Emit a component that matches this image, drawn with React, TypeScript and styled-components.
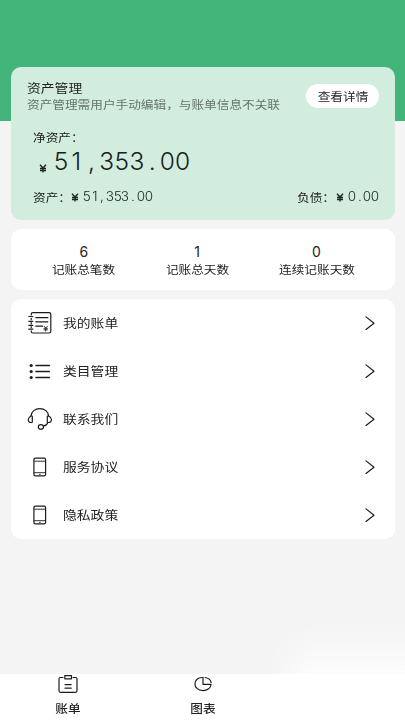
import React from "react";
import styled, { createGlobalStyle } from "styled-components";

const Global = createGlobalStyle`
  * { box-sizing: border-box; }
  body {
    margin: 0;
    background: #f4f4f4;
    font-family: Inter, "Noto Sans CJK SC", sans-serif;
    color: #222;
  }
`;

const Screen = styled.div`
  width: 405px;
  height: 720px;
  display: flex;
  flex-direction: column;
  overflow: hidden;
  background: linear-gradient(#43b57a 0 121px, #f4f4f4 121px);
`;

const Content = styled.main`
  flex: 1;
  display: flex;
  flex-direction: column;
  gap: 9px;
  padding: 67px 10px 0 11px;
`;

/* Wide lettering: glyphs are stretched sideways from the aligned edge. */
const Label = styled.span<{
  $size: number;
  $origin?: string;
  $color?: string;
  $weight?: number;
  $line?: number;
  $stretch?: number;
}>`
  display: block;
  flex-shrink: 0;
  width: max-content;
  white-space: nowrap;
  font-family: "Noto Sans CJK SC", sans-serif;
  font-size: ${(p) => p.$size}px;
  line-height: ${(p) => p.$line ?? 16}px;
  font-weight: ${(p) => p.$weight ?? 400};
  color: ${(p) => p.$color ?? "#222"};
  transform: scaleX(${(p) => p.$stretch ?? 1.15});
  transform-origin: ${(p) => p.$origin ?? "left"} center;
`;

const AssetCard = styled.section`
  height: 153px;
  border-radius: 10px;
  background: #d2ecde;
  padding: 13px 16px 0;
`;

const CardTop = styled.div`
  display: flex;
  justify-content: space-between;
  height: 49px;
`;

const DetailButton = styled.button`
  display: flex;
  align-items: center;
  justify-content: center;
  width: 73px;
  height: 24px;
  margin-top: 4px;
  padding: 0;
  border: 0;
  border-radius: 12px;
  background: #fff;
`;

const CardBody = styled.div`
  padding-left: 5.5px;
`;

const NetRow = styled.div`
  display: flex;
  align-items: flex-end;
  height: 33px;
  padding-left: 6px;
`;

const TotalsRow = styled.div`
  display: flex;
  justify-content: space-between;
  align-items: center;
  height: 16px;
  margin-top: 11px;
`;

const Total = styled.div`
  display: flex;
  align-items: center;
`;

const TotalLabel = styled.div<{ $w: number }>`
  width: ${(p) => p.$w}px;
`;

const Digits = styled.span<{ $size: number; $pitch: number; $line: number; $stretch: number }>`
  display: flex;
  font-family: Inter, sans-serif;
  font-size: ${(p) => p.$size}px;
  font-weight: 300;
  line-height: ${(p) => p.$line}px;
  color: #18201c;
  i {
    display: flex;
    justify-content: center;
    font-style: normal;
    width: ${(p) => p.$pitch}px;
    transform: scaleX(${(p) => p.$stretch});
  }
`;

const Yen = styled.svg<{ $gap: number; $drop?: number }>`
  width: 8px;
  height: 9px;
  margin-right: ${(p) => p.$gap}px;
  margin-bottom: ${(p) => p.$drop ?? 0}px;
  fill: none;
  stroke: #1c2420;
  stroke-width: 1.35;
`;

const StatsCard = styled.section`
  display: flex;
  height: 61px;
  padding: 14px 0 0 16px;
  border-radius: 10px;
  background: #fff;
`;

const Stat = styled.div<{ $w: number }>`
  flex: 0 0 ${(p) => p.$w}px;
  display: flex;
  flex-direction: column;
  align-items: center;
`;

const StatValue = styled.span`
  font-size: 14px;
  line-height: 18px;
`;

const Menu = styled.ul`
  margin: 0;
  padding: 0;
  list-style: none;
  height: 240px;
  border-radius: 10px;
  background: #fff;
`;

const MenuRow = styled.li`
  display: flex;
  align-items: center;
  height: 48px;
  padding: 0 20px 0 16px;
`;

const IconBox = styled.span`
  display: flex;
  width: 26px;
  height: 26px;
  margin-right: 10px;
`;

const Glyph = styled.svg<{ $w?: number; $h?: number }>`
  display: block;
  flex-shrink: 0;
  width: ${(p) => p.$w ?? 26}px;
  height: ${(p) => p.$h ?? 26}px;
  fill: none;
  stroke: #1c1c1c;
  stroke-width: 1.2;
  stroke-linecap: round;
  stroke-linejoin: round;
`;

const Chevron = styled(Glyph)`
  margin-left: auto;
`;

const TabBar = styled.nav`
  display: flex;
  height: 46px;
  background: #fff;
`;

const BottomArea = styled.div`
  position: relative;
`;

const Haze = styled.div`
  position: absolute;
  right: 0;
  bottom: 0;
  width: 139px;
  height: 100px;
  background: linear-gradient(rgba(255, 255, 255, 0), rgba(255, 255, 255, 0.4) 30%, rgba(255, 255, 255, 0.8) 54%, #fff 75%);
  mask-image: linear-gradient(90deg, transparent, #000 35%);
`;

const Tab = styled.div`
  width: 135px;
  display: flex;
  flex-direction: column;
  align-items: center;
`;

type AmountProps = { value: string; size: number; pitch: number; line: number; stretch?: number };

function Amount({ value, size, pitch, line, stretch = 1 }: AmountProps) {
  return (
    <Digits $size={size} $pitch={pitch} $line={line} $stretch={stretch}>
      {value.split("").map((c, i) => (
        <i key={i}>{c}</i>
      ))}
    </Digits>
  );
}

function YenMark({ gap, drop }: { gap: number; drop?: number }) {
  return (
    <Yen $gap={gap} $drop={drop} viewBox="0 0 8 9">
      <path d="M1 .8 4 4 7 .8M4 4v4.5M1 4.5h6M1 6.5h6" />
    </Yen>
  );
}

const phone = (
  <>
    <rect x="6.9" y="4.1" width="11.7" height="17.8" rx="1.6" />
    <path d="M7.2 7.2h11M7.2 18.7h11" strokeWidth=".9" />
    <path d="M12.3 20.4h1" strokeWidth=".8" />
  </>
);

const items = [
  {
    label: "我的账单",
    icon: (
      <>
        <path d="M4.2 5V4.2q0-1.5 1.8-1.5h16q1.800 0 1.800 1.500v17q0 1.800-1.800 1.800H6q-1.800 0-1.800-1.800V20.800M4.200 8.300v1.400M4.200 12.700v1.300M4.200 16.700v1" />
        <path d="M1.800 6.500h4M1.800 11.300h4M1.800 15.300h4M1.800 19.200h4M8.800 7.700h12M8.800 11.800h12M8.800 16.200h6.700" />
        <path d="m17 16.200 1.700 1.800 1.700-1.800M18.700 18v3M17 18.300h3.400M17 19.800h3.400" strokeWidth=".9" />
      </>
    ),
  },
  {
    label: "类目管理",
    icon: (
      <>
        <path d="M9 7.500h13.300M9 13.500h13.300M9 19.500h13.300" strokeWidth="1.5" />
        <g fill="#1c1c1c" stroke="none">
          <circle cx="4.2" cy="7.5" r="1.6" />
          <circle cx="4.2" cy="13.5" r="1.6" />
          <circle cx="4.2" cy="19.5" r="1.6" />
        </g>
      </>
    ),
  },
  {
    label: "联系我们",
    icon: (
      <>
        <path d="M4.200 9.800C4.400 5.500 8 2.700 12.800 2.700S21.300 5.500 21.500 9.800" />
        <path d="M5.300 10.200v6C2.600 17.200 1.200 15.400 1.200 13.700S3 10.500 4.200 9.800ZM20.300 10.200v6c2.700 1 4.200-.8 4.200-2.500S22.700 10.500 21.500 9.800Z" />
        <path d="M20.800 16.400q-.7 3.100-4.300 3.700" />
        <ellipse cx="13.9" cy="20.9" rx="2.6" ry="2.2" />
      </>
    ),
  },
  { label: "服务协议", icon: phone },
  { label: "隐私政策", icon: phone },
];

const stats = [
  { value: "6", label: "记账总笔数", w: 113.5 },
  { value: "1", label: "记账总天数", w: 113 },
  { value: "0", label: "连续记账天数", w: 126 },
];

export default function App() {
  return (
    <Screen>
      <Global />
      <Content>
        <AssetCard>
          <CardTop>
            <div>
              <Label $size={12}>资产管理</Label>
              <Label $size={11} $color="#65756c">
                资产管理需用户手动编辑，与账单信息不关联
              </Label>
            </div>
            <DetailButton>
              <Label $size={11} $origin="center">
                查看详情
              </Label>
            </DetailButton>
          </CardTop>
          <CardBody>
            <Label $size={11}>净资产：</Label>
            <NetRow>
              <YenMark gap={7} drop={5} />
              <Amount value="51,353.00" size={24.5} pitch={15.2} line={33} />
            </NetRow>
            <TotalsRow>
              <Total>
                <TotalLabel $w={38.5}>
                  <Label $size={11}>资产：</Label>
                </TotalLabel>
                <YenMark gap={4} />
                <Amount value="51,353.00" size={12.5} pitch={7.7} line={16} stretch={1.08} />
              </Total>
              <Total>
                <TotalLabel $w={39}>
                  <Label $size={11}>负债：</Label>
                </TotalLabel>
                <YenMark gap={4} />
                <Amount value="0.00" size={12.5} pitch={7.8} line={16} stretch={1.08} />
              </Total>
            </TotalsRow>
          </CardBody>
        </AssetCard>
        <StatsCard>
          {stats.map((s) => (
            <Stat key={s.label} $w={s.w}>
              <StatValue>{s.value}</StatValue>
              <Label $size={11} $origin="center" $line={17}>
                {s.label}
              </Label>
            </Stat>
          ))}
        </StatsCard>
        <Menu>
          {items.map((m) => (
            <MenuRow key={m.label}>
              <IconBox>
                <Glyph viewBox="0 0 26 26">{m.icon}</Glyph>
              </IconBox>
              <Label $size={12}>{m.label}</Label>
              <Chevron $w={10} $h={14} viewBox="0 0 10 14">
                <path d="m1 .9 8 6.3-8 6.3" />
              </Chevron>
            </MenuRow>
          ))}
        </Menu>
      </Content>
      <BottomArea>
        <TabBar>
          <Tab>
            <Glyph $w={20} $h={20} viewBox="0 0 20 20">
              <path d="M5 3.500H2.500Q1 3.500 1 5v11.800q0 1.500 1.500 1.500h15q1.500 0 1.500-1.500V5q0-1.500-1.500-1.500H15" />
              <path d="M6.800 1.600h6.700v3.200H6.800ZM7 10.600h6.200M7 14.200h6.200" />
            </Glyph>
            <Label $size={11} $origin="center" $weight={500} $line={28}>
              账单
            </Label>
          </Tab>
          <Tab>
            <Glyph $w={20} $h={20} viewBox="0 0 20 20">
              <path d="M8.800 3.500C4.800 3.700 1.900 6.400 1.900 10s3.400 6.600 8 6.600 8-2.600 8.200-6.300H10V3.300M12 3.500C15.300 4 17.600 5.800 18.200 8.500" />
            </Glyph>
            <Label $size={11} $origin="center" $weight={500} $line={28}>
              图表
            </Label>
          </Tab>
        </TabBar>
        <Haze />
      </BottomArea>
    </Screen>
  );
}
